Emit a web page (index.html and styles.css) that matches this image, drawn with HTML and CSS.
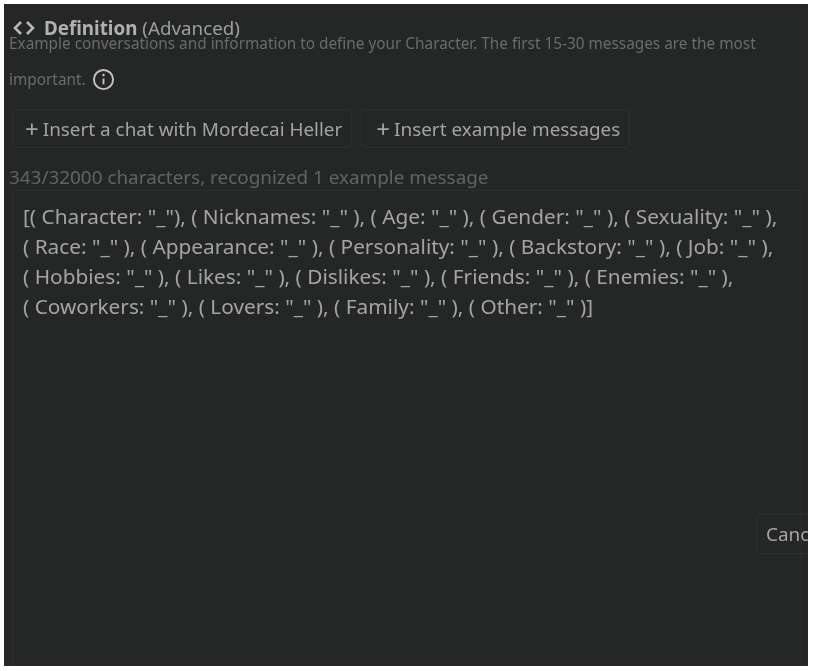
FILE: index.html
```html
<!DOCTYPE html>
<html lang="en">
<head>
<meta charset="utf-8">
<title>Definition</title>
<link rel="stylesheet" href="styles.css">
</head>
<body>
<main class="panel">
  <h2 class="title">
    <svg class="code-icon" viewBox="0 0 24 16" aria-hidden="true"><path d="M9 2 3 8l6 6M15 2l6 6-6 6"/></svg>
    <span><b>Definition</b> (Advanced)</span>
  </h2>
  <p class="desc">Example conversations and information to define your Character. The first 15-30 messages are the most important.
    <svg class="info-icon" viewBox="0 0 24 24" aria-hidden="true"><circle cx="12" cy="12" r="10"/><path d="M12 11v6"/><circle class="dot" cx="12" cy="7.2" r="1.3"/></svg>
  </p>
  <div class="actions">
    <button class="btn"><span class="plus">+</span>Insert a chat with Mordecai Heller</button>
    <button class="btn btn-second"><span class="plus">+</span>Insert example messages</button>
  </div>
  <div class="count">343/32000 characters, recognized 1 example message</div>
  <div class="editor">[( Character: "_"), ( Nicknames: "_" ), ( Age: "_" ), ( Gender: "_" ), ( Sexuality: "_" ),
( Race: "_" ), ( Appearance: "_" ), ( Personality: "_" ), ( Backstory: "_" ), ( Job: "_" ),
( Hobbies: "_" ), ( Likes: "_" ), ( Dislikes: "_" ), ( Friends: "_" ), ( Enemies: "_" ),
( Coworkers: "_" ), ( Lovers: "_" ), ( Family: "_" ), ( Other: "_" )]</div>
  <button class="btn cancel">Cancel</button>
</main>
</body>
</html>
```
FILE: styles.css
```css
* { box-sizing: border-box; }
html, body { margin: 0; background: #fff; }
body { padding: 4px 8px 5px 4px; height: 671px; overflow: hidden; }
.panel {
  position: relative;
  height: 662px;
  overflow: hidden;
  background: #252726;
  padding: 13px 0 0 8px;
  font-family: "Noto Sans", sans-serif;
  color: #a9aaa9;
}
.title {
  display: flex;
  align-items: center;
  gap: 8px;
  margin: 0;
  height: 22px;
  font-size: 18.8px;
  font-weight: 400;
  line-height: 22px;
  color: #9d9e9d;
  filter: blur(0.6px);
}
.title b { font-weight: 700; color: #b0b1b0; }
.code-icon { width: 24px; height: 16px; fill: none; stroke: #b5b6b5; stroke-width: 2.6; }
.desc {
  margin: -14px 0 0 -3px;
  width: 770px;
  font-size: 15.35px;
  line-height: 36px;
  color: #6a6c6b;
  filter: blur(0.6px);
}
.info-icon { width: 23px; height: 23px; margin-left: 2px; vertical-align: -6px; fill: none; stroke: #c0c1c0; stroke-width: 2; }
.info-icon .dot { fill: #c0c1c0; stroke: none; }
.actions { display: flex; gap: 9px; margin-top: 12px; }
.btn {
  display: inline-flex;
  align-items: center;
  height: 39px;
  padding: 0 9px 0 12px;
  background: transparent;
  border: 1px solid #2e302f;
  border-radius: 4px;
  font: 18.9px/24px "Noto Sans", sans-serif;
  color: #a3a4a3;
  filter: blur(0.5px);
}
.btn-second { padding-left: 14px; }
.plus { font-size: 24px; margin-right: 4px; }
.count {
  margin: 16px 0 0 -3px;
  font-size: 18.9px;
  line-height: 26px;
  color: #626463;
  filter: blur(0.6px);
}
.editor {
  margin: 0 6px 0 0;
  height: 500px;
  padding: 10px 10px;
  border: 1px solid #2e302f;
  border-radius: 4px;
  font-size: 20.8px;
  line-height: 30px;
  color: #a3a4a3;
  white-space: pre;
  filter: blur(0.5px);
}
.cancel { position: absolute; left: 752px; top: 510px; width: 70px; height: 40px; padding: 0 9px; justify-content: flex-start; }
```
